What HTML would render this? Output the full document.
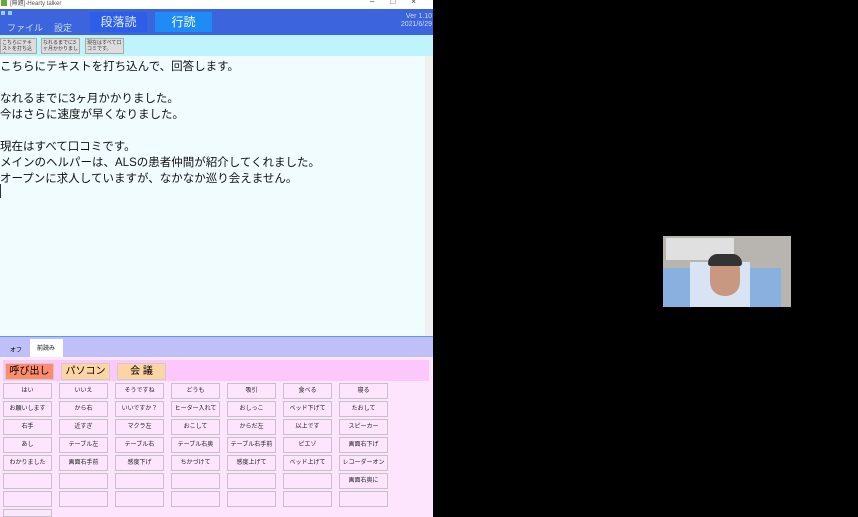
<!DOCTYPE html><html><head><meta charset="utf-8"><style>
html,body{margin:0;width:858px;height:517px;overflow:hidden}
body{background:#000;position:relative;font-family:"Liberation Sans","Noto Sans CJK JP",sans-serif}
.a{position:absolute}
.btn{position:absolute;width:49px;background:#fde6fd;border:1px solid #c8c0c8;font-size:6px;text-align:center;line-height:14px;color:#222;box-sizing:border-box;height:16px}
.tb{position:absolute;top:38px;height:16px;border:1px solid #aaa;background:#ddd;font-size:5px;line-height:6px;color:#333;padding:1px;box-sizing:border-box;overflow:hidden}
</style></head><body>
<div class="a" style="left:0;top:0;width:433px;height:9px;background:#fff"></div>
<div class="a" style="left:1px;top:0;width:6px;height:6px;background:#6a3"></div>
<div class="a" style="left:10px;top:-2px;font-size:6px;color:#555">[無題]-Hearty talker</div>
<div class="a" style="left:370px;top:-3px;font-size:8px;color:#333;letter-spacing:16px">–□×</div>
<div class="a" style="left:0;top:9px;width:433px;height:26px;background:#3c64dc"></div>
<div class="a" style="left:1px;top:11px;width:4px;height:4px;background:#9cf"></div>
<div class="a" style="left:8px;top:11px;width:4px;height:4px;background:#9cf"></div>
<div class="a" style="left:7px;top:21px;font-size:9px;color:#cde">ファイル</div>
<div class="a" style="left:54px;top:21px;font-size:9px;color:#cde">設定</div>
<div class="a" style="left:90px;top:12px;width:57px;height:20px;background:#2d5ee8;color:#dfe8ff;font-size:12px;text-align:center;line-height:20px">段落読</div>
<div class="a" style="left:155px;top:12px;width:57px;height:20px;background:#1e8cf4;color:#fff;font-size:12px;text-align:center;line-height:20px">行読</div>
<div class="a" style="left:392px;top:13px;font-size:7px;color:#cde;text-align:right;line-height:8px;width:40px">Ver 1.10<br>2021/6/29</div>
<div class="a" style="left:0;top:35px;width:433px;height:21px;background:#c0f4fc"></div>
<div class="tb" style="left:0;width:37px">こちらにテキストを打ち込ん</div>
<div class="tb" style="left:41px;width:39px">なれるまでに3ヶ月かかりまし</div>
<div class="tb" style="left:85px;width:39px">現在はすべて口コミです。</div>
<div class="a" style="left:0;top:56px;width:425px;height:280px;background:#f0fcff;font-size:11.5px;line-height:16px;color:#111;padding-top:3px">こちらにテキストを打ち込んで、回答します。<br><br>なれるまでに3ヶ月かかりました。<br>今はさらに速度が早くなりました。<br><br>現在はすべて口コミです。<br>メインのヘルパーは、ALSの患者仲間が紹介してくれました。<br>オープンに求人していますが、なかなか巡り会えません。</div>
<div class="a" style="left:0;top:184px;width:1px;height:14px;background:#333"></div>
<div class="a" style="left:425px;top:56px;width:8px;height:280px;background:#f0f0f0"></div>
<div class="a" style="left:0;top:336px;width:433px;height:1px;background:#59f"></div>
<div class="a" style="left:0;top:337px;width:433px;height:20px;background:#c0c0f8"></div>
<div class="a" style="left:30px;top:339px;width:33px;height:18px;background:#fff"></div>
<div class="a" style="left:10px;top:345px;font-size:6px">オフ</div>
<div class="a" style="left:37px;top:343px;font-size:6px">前読み</div>
<div class="a" style="left:0;top:357px;width:433px;height:160px;background:#fde6fd"></div>
<div class="a" style="left:3px;top:360px;width:426px;height:21px;background:#fcc8fc"></div>
<div class="a" style="left:5px;top:363px;width:47px;height:15px;background:#fc8c6c;border:1px solid #ccc;font-size:10px;text-align:center;line-height:15px">呼び出し</div>
<div class="a" style="left:61px;top:363px;width:47px;height:15px;background:#fdd4a4;border:1px solid #ccc;font-size:10px;text-align:center;line-height:15px">パソコン</div>
<div class="a" style="left:117px;top:363px;width:47px;height:15px;background:#fdd4a4;border:1px solid #ccc;font-size:10px;text-align:center;line-height:15px">会 議</div>
<div id="g"></div>
<div class="a" style="left:663px;top:236px;width:128px;height:71px;background:#b8b4b0"></div>
<div class="a" style="left:666px;top:238px;width:68px;height:22px;background:#e0e0e0"></div>
<div class="a" style="left:663px;top:268px;width:118px;height:39px;background:#8ab0e0"></div>
<div class="a" style="left:690px;top:262px;width:60px;height:45px;background:#d8e4f4"></div>
<div class="a" style="left:710px;top:256px;width:30px;height:40px;background:#c89880;border-radius:14px"></div>
<div class="a" style="left:708px;top:254px;width:34px;height:12px;background:#333;border-radius:14px 14px 4px 4px"></div>
<script>
var t=[["はい","いいえ","そうですね","どうも","吸引","食べる","寝る"],["お願いします","から右","いいですか？","ヒーター入れて","おしっこ","ベッド下げて","たおして"],["右手","近すぎ","マクラ左","おこして","からだ左","以上です","スピーカー"],["あし","テーブル左","テーブル右","テーブル右奥","テーブル右手前","ピエゾ","画面右下げ"],["わかりました","画面右手前","感度下げ","ちかづけて","感度上げて","ベッド上げて","レコーダーオンして"],["","","","","","","画面右奥に"],["","","","","","",""]];
var h="";for(var r=0;r<7;r++)for(var c=0;c<7;c++)h+='<div class="btn" style="left:'+(3+c*56)+'px;top:'+(383+r*18)+'px">'+t[r][c]+'</div>';
h+='<div class="btn" style="left:3px;top:509px;height:8px"></div>';
document.getElementById("g").innerHTML=h;
</script>
</body></html>
